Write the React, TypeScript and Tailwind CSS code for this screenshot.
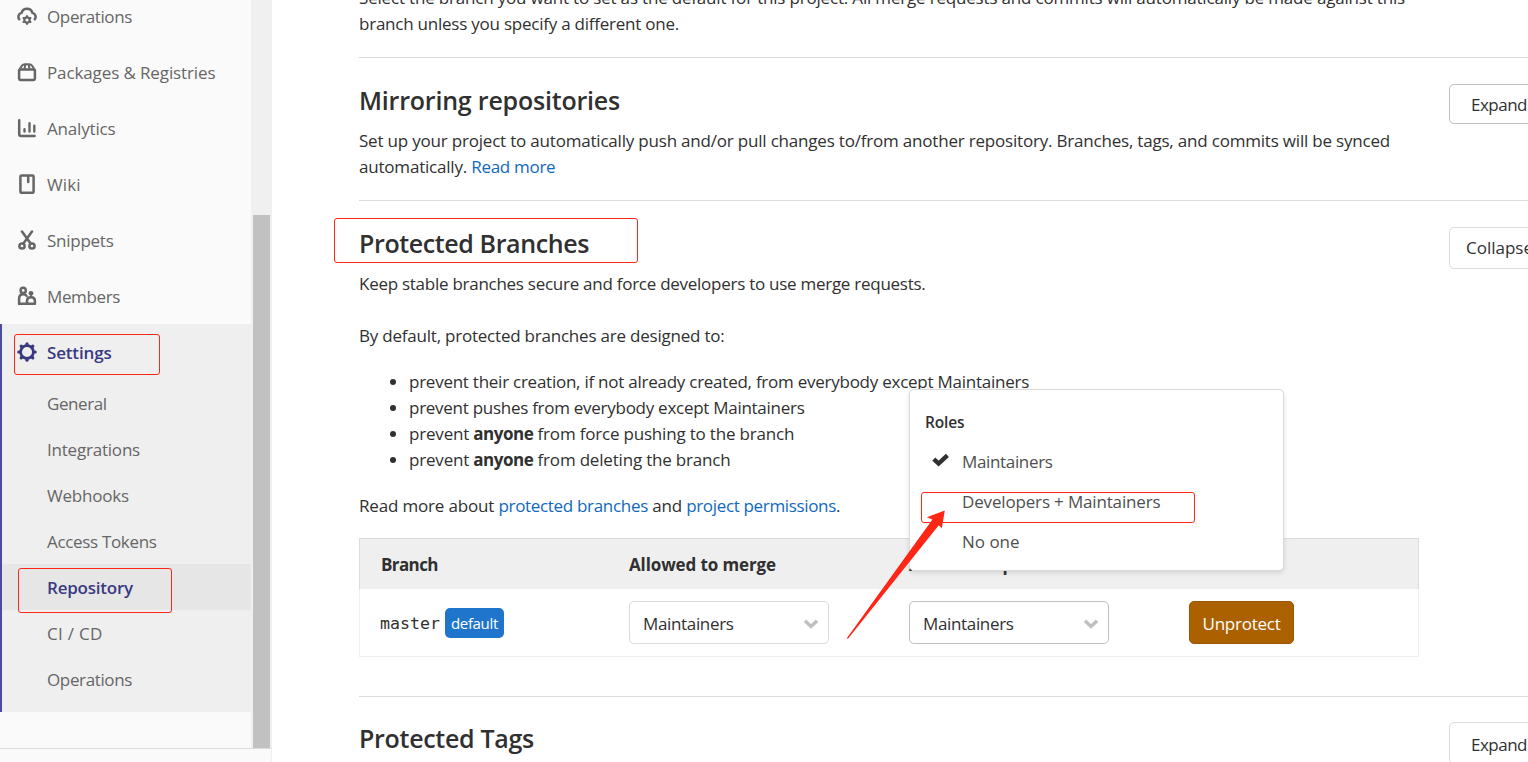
import type { ReactNode } from "react";

function Icon({ children }: { children: ReactNode }) {
  return (
    <svg viewBox="0 0 20 20" className="h-5 w-5 shrink-0" fill="none" stroke="currentColor" strokeWidth="2.5" strokeLinecap="round" strokeLinejoin="round">
      {children}
    </svg>
  );
}

const knobs = [0, 45, 90, 135, 180, 225, 270, 315];

const CloudGear = () => (
  <Icon>
    <path d="M2.2 13.2A4 4 0 0 1 4.6 6.9 5.6 5.6 0 0 1 15.4 6.9 4 4 0 0 1 17.8 13.2" />
    <circle cx="10" cy="14" r="2.7" strokeWidth="2.2" />
    {[0, 60, 120, 180, 240, 300].map((a) => (
      <path key={a} d="M10 10.4V9.9" strokeWidth="2" transform={`rotate(${a} 10 14)`} />
    ))}
  </Icon>
);

const PackageIcon = () => (
  <Icon>
    <rect x="2.1" y="7.4" width="15.8" height="10.6" rx="1.2" />
    <path d="M2.6 7.2 5 3.6Q6 2.2 8 2.2H12Q14 2.2 15 3.6L17.4 7.2M8.4 2.6 7.4 7M11.6 2.6 12.6 7" strokeWidth="2" />
  </Icon>
);

const ChartIcon = () => (
  <Icon>
    <path d="M2.2 2.3V16Q2.2 18 4.2 18H17.6" />
    <path d="M7.5 11.2V13.6M12.5 5.2V13.6M17.3 7.6V13.6" strokeWidth="2.4" />
  </Icon>
);

const BookIcon = () => (
  <Icon>
    <rect x="3.4" y="1.4" width="13.2" height="17.4" rx="1.2" />
    <path d="M11.2 2V8" />
  </Icon>
);

const ScissorsIcon = () => (
  <Icon>
    <circle cx="5" cy="16" r="2.6" />
    <circle cx="15" cy="16" r="2.6" />
    <path d="M5 1.6 13.6 13.6M15 1.6 6.4 13.6" />
  </Icon>
);

const MembersIcon = () => (
  <Icon>
    <circle cx="6.2" cy="4.4" r="2.6" />
    <circle cx="14" cy="7.3" r="2.4" fill="currentColor" stroke="none" />
    <path d="M2.1 17.7V12.6Q2.1 8.2 6.2 8.2 8.6 8.2 9.6 10" />
    <path d="M2.1 17.7H17.9V15Q17.9 11.2 14 11.2 10 11.2 10 15V17.6" />
    <path d="M14.2 8V11" strokeWidth="1.6" />
  </Icon>
);

const GearIcon = () => (
  <Icon>
    <circle cx="10" cy="10" r="6.4" strokeWidth="2.7" />
    {knobs.map((a) => (
      <path key={a} d="M10 1.8V3" strokeWidth="3.2" transform={`rotate(${a} 10 10)`} />
    ))}
  </Icon>
);

const nav = [
  { label: "Operations", icon: <CloudGear />, track: "tracking-[-0.367px]" },
  { label: "Packages & Registries", icon: <PackageIcon />, track: "tracking-[-0.118px]" },
  { label: "Analytics", icon: <ChartIcon />, track: "tracking-[-0.169px]" },
  { label: "Wiki", icon: <BookIcon />, track: "tracking-[0.07px]" },
  { label: "Snippets", icon: <ScissorsIcon />, track: "tracking-[-0.256px]" },
  { label: "Members", icon: <MembersIcon />, track: "tracking-[-0.367px]" },
];

const subnav = [
  { label: "General", track: "tracking-[-0.438px]" },
  { label: "Integrations", track: "tracking-[-0.209px]" },
  { label: "Webhooks", track: "tracking-[-0.194px]" },
  { label: "Access Tokens", track: "tracking-[-0.33px]" },
  { label: "Repository", track: "tracking-[-0.216px]", active: true },
  { label: "CI / CD", track: "tracking-[0.276px]" },
  { label: "Operations", track: "tracking-[-0.367px]" },
];

function Sidebar() {
  return (
    <aside className="flex w-[272px] shrink-0 flex-col bg-[#fafafa] text-[#666]">
      <div className="flex h-[748px] shrink-0 overflow-hidden">
        <nav className="-mt-3 w-[251px]">
          {nav.map((n) => (
            <a key={n.label} className="flex h-14 items-center gap-2.5 pl-[17px]">
              {n.icon}
              <span className={`relative top-px ${n.track}`}>{n.label}</span>
            </a>
          ))}
          <div className="h-[388px] border-l-2 border-[#4b4ba3] bg-[#efefef]">
            <a className="flex h-14 items-center gap-2.5 pl-[15px] font-semibold text-[#393982]">
              <GearIcon />
              <span className="relative top-px tracking-[-0.166px]">Settings</span>
            </a>
            {subnav.map((s) => (
              <a
                key={s.label}
                className={`flex h-[46px] items-center pl-[45px] ${s.track} ${s.active ? "bg-[#e6e6e6] font-semibold text-[#393982]" : ""}`}
              >
                <span className="relative top-px">{s.label}</span>
              </a>
            ))}
          </div>
        </nav>
        <div className="flex w-[21px] flex-col bg-[#f0f0f0] pl-0.5 pt-[215px]">
          <div className="w-[17px] flex-1 bg-[#c1c1c1]" />
        </div>
      </div>
      <div className="flex-1 border-r border-t border-r-[#f0f0f0] border-t-[#dbdbdb]" />
    </aside>
  );
}

function Heading({ children, track }: { children: string; track: string }) {
  return <h4 className={`text-[25px] font-semibold leading-8 ${track}`}>{children}</h4>;
}

function Select({ border }: { border: string }) {
  return (
    <div className={`flex h-[43px] w-[200px] items-center justify-between rounded-[5px] border bg-white pl-[13px] pr-2.5 ${border}`}>
      <span className="relative top-px tracking-[-0.34px]">Maintainers</span>
      <svg viewBox="0 0 14 10" className="relative top-px h-2.5 w-3.5" fill="none" stroke="#bfbfbf" strokeWidth="3.4">
        <path d="M1 1.8 7 7.4 13 1.8" />
      </svg>
    </div>
  );
}

function RolesMenu() {
  return (
    <div className="absolute left-[909px] top-[389px] h-[182px] w-[375px] rounded-[5px] border border-[#dbdbdb] bg-white pt-5 shadow-[0_2px_5px_rgba(0,0,0,0.12)]">
      <div className="flex h-8 items-start pl-[15px]">
        <span className="text-[15.5px] font-semibold leading-6 tracking-[-0.132px]">Roles</span>
      </div>
      <div className="flex h-10 items-center pl-[22px] text-[#4f4f4f]">
        <svg viewBox="0 0 17 14" className="relative -top-0.5 h-3.5 w-[17px]" fill="none" stroke="#303030" strokeWidth="4.4">
          <path d="M1.8 6.2 6.6 10.6 15.4 2.4" />
        </svg>
        <span className="ml-[13px] tracking-[-0.34px]">Maintainers</span>
      </div>
      <div className="flex h-10 items-center pl-[52px] tracking-[-0.16px] text-[#4f4f4f]">Developers + Maintainers</div>
      <div className="flex h-10 items-center pl-[52px] tracking-[-0.02px] text-[#4f4f4f]">No one</div>
    </div>
  );
}

export default function App() {
  return (
    <div className="relative flex h-[762px] w-[1528px] overflow-hidden bg-white font-['Open_Sans','Noto_Sans',sans-serif] text-[17px] leading-[26px] text-[#303030]">
      <Sidebar />
      <main className="ml-[87px] flex w-[1200px] shrink-0 flex-col whitespace-nowrap">
        <section className="-mt-[15px] h-[73px] shrink-0 border-b border-[#dbdbdb]">
          <p className="tracking-[-0.185px]">
            Select the branch you want to set as the default for this project. All merge requests and commits will automatically be made against this
          </p>
          <p className="tracking-[-0.234px]">branch unless you specify a different one.</p>
        </section>

        <section className="flex h-[143px] shrink-0 border-b border-[#dbdbdb]">
          <div className="w-[1090px] shrink-0 pt-[26px]">
            <Heading track="tracking-[-0.204px]">Mirroring repositories</Heading>
            <p className="mt-3 tracking-[-0.198px]">
              Set up your project to automatically push and/or pull changes to/from another repository. Branches, tags, and commits will be synced
            </p>
            <p className="tracking-[-0.2px]">
              automatically. <a className="tracking-[-0.3px] text-[#1068bf]">Read more</a>
            </p>
          </div>
          <button className="mt-[26px] flex h-10 w-[100px] shrink-0 items-center rounded-[5px] border border-[#bfbfbf] pl-[21px] tracking-[-0.5px]">
            <span className="relative top-px">Expand</span>
          </button>
        </section>

        <section className="flex h-[496px] shrink-0 border-b border-[#dbdbdb]">
          <div className="w-[1090px] shrink-0 pt-[26px]">
            <Heading track="tracking-[-0.389px]">Protected Branches</Heading>
            <p className="mt-3 tracking-[-0.266px]">Keep stable branches secure and force developers to use merge requests.</p>
            <p className="mt-[26px] tracking-[-0.217px]">By default, protected branches are designed to:</p>
            <ul className="mt-5 list-disc pl-[50px]">
              <li className="tracking-[-0.25px]">prevent their creation, if not already created, from everybody except Maintainers</li>
              <li className="tracking-[-0.273px]">prevent pushes from everybody except Maintainers</li>
              <li className="tracking-[-0.19px]">
                prevent <b className="tracking-[-0.476px]">anyone</b> from force pushing to the branch
              </li>
              <li className="tracking-[-0.19px]">
                prevent <b className="tracking-[-0.476px]">anyone</b> from deleting the branch
              </li>
            </ul>
            <p className="mt-5 tracking-[-0.17px]">
              Read more about <a className="tracking-[-0.316px] text-[#1068bf]">protected branches</a> and{" "}
              <a className="tracking-[-0.34px] text-[#1068bf]">project permissions</a>.
            </p>
            <div className="mt-[19px] w-[1060px]">
              <div className="grid h-[51px] grid-cols-[269px_280px_280px_1fr] items-center border border-b-0 border-[#dbdbdb] bg-[#efefef] pt-0.5 font-bold">
                <span className="pl-[21px] tracking-[-0.6px]">Branch</span>
                <span className="tracking-[-0.114px]">Allowed to merge</span>
                <span className="tracking-[-0.114px]">Allowed to push</span>
              </div>
              <div className="grid h-[68px] grid-cols-[269px_280px_280px_1fr] items-center border border-t-0 border-[#efefef]">
                <div className="flex items-center gap-[5px] pl-5">
                  <span className="relative top-px font-['DejaVu_Sans_Mono',monospace] text-[16.6px]">master</span>
                  <span className="flex h-[30px] w-[59px] items-center justify-center rounded-[5px] bg-[#1f75cb] text-[15px] tracking-[-0.331px] text-white">
                    default
                  </span>
                </div>
                <Select border="border-[#dbdbdb]" />
                <Select border="border-[#bfbfbf]" />
                <button className="flex h-[43px] w-[105px] items-center justify-center rounded-[5px] border border-[#9c5500] bg-[#ab6100] tracking-[-0.245px] text-white">
                  <span className="relative top-px">Unprotect</span>
                </button>
              </div>
            </div>
          </div>
          <button className="mt-[26px] flex h-[42px] w-[100px] shrink-0 items-center rounded-[5px] border border-[#dbdbdb] pl-4">
            <span>Collapse</span>
          </button>
        </section>

        <section className="flex shrink-0">
          <div className="w-[1090px] shrink-0 pt-[25px]">
            <Heading track="tracking-[-0.295px]">Protected Tags</Heading>
          </div>
          <button className="mt-[25px] flex h-[43px] w-[100px] shrink-0 items-center rounded-[5px] border border-[#dbdbdb] pl-[21px] tracking-[-0.5px]">
            <span className="relative top-px">Expand</span>
          </button>
        </section>
      </main>

      <RolesMenu />

      <div className="absolute left-[14px] top-[334px] h-[41px] w-[146px] rounded-[3px] border border-[#ff2616]" />
      <div className="absolute left-[18px] top-[568px] h-[45px] w-[154px] rounded-[3px] border border-[#ff2616]" />
      <div className="absolute left-[334px] top-[218px] h-[45px] w-[304px] rounded-[3px] border border-[#ff2616]" />
      <div className="absolute left-[921px] top-[492px] h-[31px] w-[274px] rounded-[3px] border border-[#ff2616]" />
      <svg viewBox="0 0 100 130" className="absolute left-[846px] top-[510px] h-[130px] w-[100px]" fill="#ff2616">
        <path d="M0.6 128.4 86.4 9.6 80.8 7.2 98.8 0.6 95.8 18.2 92.8 15.2 2.2 128.4Z" />
      </svg>
    </div>
  );
}
